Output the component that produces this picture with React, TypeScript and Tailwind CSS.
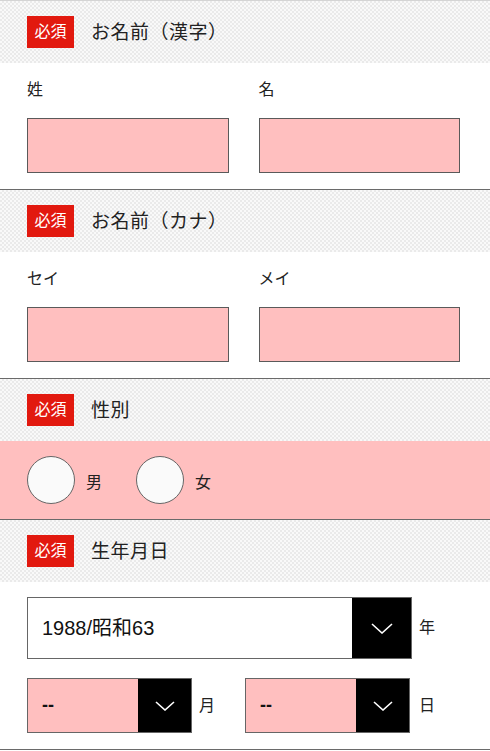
import React from "react";

const font = { fontFamily: '"Liberation Sans", "Noto Sans CJK JP", sans-serif' };

function Header({ label }: { label: string }) {
  return (
    <div className="h-[62px] flex items-center pl-[27px] bg-[repeating-conic-gradient(#eaeaea_0_25%,#f9f9f9_0_50%)] bg-[length:4px_4px]">
      <span className="w-[47px] h-[32px] bg-[#e2190f] text-white text-[16px] flex items-center justify-center leading-none">
        必須
      </span>
      <span className="ml-[17px] text-[19px] tracking-[0.5px] text-[#222] leading-none">{label}</span>
    </div>
  );
}

function Chevron({ w, h }: { w: number; h: number }) {
  return (
    <svg width={w} height={h} viewBox={`0 0 ${w} ${h}`} fill="none">
      <polyline
        points={`1,1 ${w / 2},${h - 1} ${w - 1},1`}
        stroke="white"
        strokeWidth="1.6"
        fill="none"
      />
    </svg>
  );
}

function NameBlock({ a, b }: { a: string; b: string }) {
  return (
    <div className="bg-white pl-[27px] pr-[30px] pt-[15px] pb-[16px] grid grid-cols-2 gap-x-[30px]">
      <div>
        <div className="h-[24px] flex items-center text-[16px] text-[#222]">{a}</div>
        <div className="mt-[16px] h-[55px] bg-[#ffbfbf] border border-[#5a5a5a]" />
      </div>
      <div>
        <div className="h-[24px] flex items-center text-[16px] text-[#222]">{b}</div>
        <div className="mt-[16px] h-[55px] bg-[#ffbfbf] border border-[#5a5a5a]" />
      </div>
    </div>
  );
}

function Radio({ label }: { label: string }) {
  return (
    <div className="flex items-center">
      <div className="w-[48px] h-[48px] rounded-full bg-[#fafafa] border border-[#666]" />
      <span className="ml-[11px] text-[16px] text-[#222] mt-[6px]">{label}</span>
    </div>
  );
}

export default function App() {
  return (
    <div className="w-[490px] bg-white" style={font}>
      <div className="border-t border-[#d4d4d4]">
        <Header label="お名前（漢字）" />
        <NameBlock a="姓" b="名" />
      </div>
      <div className="border-t border-[#6a6a6a]">
        <Header label="お名前（カナ）" />
        <NameBlock a="セイ" b="メイ" />
      </div>
      <div className="border-t border-[#6a6a6a]">
        <Header label="性別" />
        <div className="h-[78px] bg-[#ffbfbf] flex items-center pl-[27px] gap-[34px]">
          <Radio label="男" />
          <Radio label="女" />
        </div>
      </div>
      <div className="border-t border-[#6a6a6a]">
        <Header label="生年月日" />
        <div className="bg-white pl-[27px] pt-[15px] pb-[16px] border-b border-[#6a6a6a]">
          <div className="flex items-center">
            <div className="w-[385px] h-[62px] border border-[#666] bg-white flex">
              <div className="flex-1 flex items-center pl-[14px] text-[20px] text-[#111]">1988/昭和63</div>
              <div className="w-[59px] h-full bg-black flex items-center justify-center">
                <Chevron w={22} h={11} />
              </div>
            </div>
            <span className="ml-[7px] text-[16px] text-[#222]">年</span>
          </div>
          <div className="flex items-center mt-[19px]">
            <div className="w-[165px] h-[55px] border border-[#666] bg-[#ffbfbf] flex">
              <div className="flex-1 flex items-center pl-[14px] text-[18px] text-[#111] font-semibold">--</div>
              <div className="w-[53px] h-full bg-black flex items-center justify-center">
                <Chevron w={20} h={10} />
              </div>
            </div>
            <span className="ml-[7px] text-[16px] text-[#222]">月</span>
            <div className="ml-[30px] w-[165px] h-[55px] border border-[#666] bg-[#ffbfbf] flex">
              <div className="flex-1 flex items-center pl-[14px] text-[18px] text-[#111] font-semibold">--</div>
              <div className="w-[53px] h-full bg-black flex items-center justify-center">
                <Chevron w={20} h={10} />
              </div>
            </div>
            <span className="ml-[9px] text-[16px] text-[#222]">日</span>
          </div>
        </div>
      </div>
    </div>
  );
}
